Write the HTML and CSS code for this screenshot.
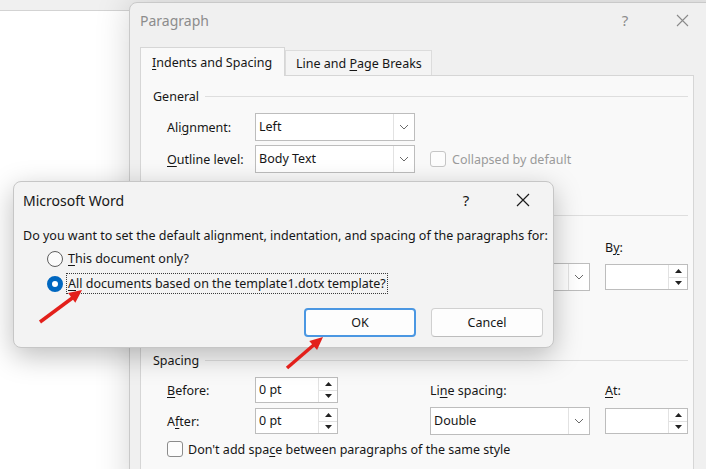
FILE: index.html
```html
<!DOCTYPE html>
<html>
<head>
<meta charset="utf-8">
<link rel="stylesheet" href="styles.css">
</head>
<body>
<div class="screen">
  <div class="ribbon"></div>

  <div class="para">
    <div class="para-title">
      <span class="para-name">Paragraph</span>
      <span class="tbtn help">?</span>
      <span class="tbtn close"><svg width="13" height="13" viewBox="0 0 13 13"><path d="M1 1 L12 12 M12 1 L1 12" stroke="#8a8a8a" stroke-width="1.1" fill="none"/></svg></span>
    </div>
    <div class="tabs">
      <div class="tab active"><u>I</u>ndents and Spacing</div>
      <div class="tab">Line and <u>P</u>age Breaks</div>
    </div>
    <div class="panel">
      <div class="legend general"><span>General</span></div>
      <div class="grid r-align">
        <span class="lbl">Ali<u>g</u>nment:</span>
        <div class="select"><span class="val">Left</span><span class="drop"><svg width="10" height="6" viewBox="0 0 10 6"><path d="M1 1 L5 5 L9 1" stroke="#6a6a6a" stroke-width="1" fill="none"/></svg></span></div>
      </div>
      <div class="grid r-outline">
        <span class="lbl"><u>O</u>utline level:</span>
        <div class="select"><span class="val">Body Text</span><span class="drop"><svg width="10" height="6" viewBox="0 0 10 6"><path d="M1 1 L5 5 L9 1" stroke="#6a6a6a" stroke-width="1" fill="none"/></svg></span></div>
        <div class="check disabled"><span class="cb"></span><span>Collapsed by default</span></div>
      </div>

      <div class="legend blank indent"></div>
      <div class="grid r-bylabel">
        <span class="lbl c4">B<u>y</u>:</span>
      </div>
      <div class="grid r-special">
        <div class="select c3"><span class="val"></span><span class="drop"><svg width="10" height="6" viewBox="0 0 10 6"><path d="M1 1 L5 5 L9 1" stroke="#6a6a6a" stroke-width="1" fill="none"/></svg></span></div>
        <div class="spin c4"><span class="val"></span><span class="arrows"><span><svg width="7" height="4" viewBox="0 0 7 4"><path d="M0 4 L3.5 0 L7 4 Z" fill="#222"/></svg></span><span><svg width="7" height="4" viewBox="0 0 7 4"><path d="M0 0 L3.5 4 L7 0 Z" fill="#222"/></svg></span></span></div>
      </div>

      <div class="legend spacing"><span>Spacing</span></div>
      <div class="grid r-before">
        <span class="lbl"><u>B</u>efore:</span>
        <div class="spin"><span class="val">0 pt</span><span class="arrows"><span><svg width="7" height="4" viewBox="0 0 7 4"><path d="M0 4 L3.5 0 L7 4 Z" fill="#222"/></svg></span><span><svg width="7" height="4" viewBox="0 0 7 4"><path d="M0 0 L3.5 4 L7 0 Z" fill="#222"/></svg></span></span></div>
        <span class="lbl">Li<u>n</u>e spacing:</span>
        <span class="lbl"><u>A</u>t:</span>
      </div>
      <div class="grid r-after">
        <span class="lbl">A<u>f</u>ter:</span>
        <div class="spin"><span class="val">0 pt</span><span class="arrows"><span><svg width="7" height="4" viewBox="0 0 7 4"><path d="M0 4 L3.5 0 L7 4 Z" fill="#222"/></svg></span><span><svg width="7" height="4" viewBox="0 0 7 4"><path d="M0 0 L3.5 4 L7 0 Z" fill="#222"/></svg></span></span></div>
        <div class="select"><span class="val">Double</span><span class="drop"><svg width="10" height="6" viewBox="0 0 10 6"><path d="M1 1 L5 5 L9 1" stroke="#6a6a6a" stroke-width="1" fill="none"/></svg></span></div>
        <div class="spin"><span class="val"></span><span class="arrows"><span><svg width="7" height="4" viewBox="0 0 7 4"><path d="M0 4 L3.5 0 L7 4 Z" fill="#222"/></svg></span><span><svg width="7" height="4" viewBox="0 0 7 4"><path d="M0 0 L3.5 4 L7 0 Z" fill="#222"/></svg></span></span></div>
      </div>
      <div class="check r-dont"><span class="cb"></span><span>Don't add spa<u>c</u>e between paragraphs of the same style</span></div>
    </div>
  </div>

  <div class="msg">
    <div class="msg-title">
      <span class="msg-name">Microsoft Word</span>
      <span class="tbtn help">?</span>
      <span class="tbtn close"><svg width="14" height="14" viewBox="0 0 14 14"><path d="M1 1 L13 13 M13 1 L1 13" stroke="#1b1b1b" stroke-width="1.2" fill="none"/></svg></span>
    </div>
    <div class="msg-text">Do you want to set the default alignment, indentation, and spacing of the paragraphs for:</div>
    <div class="opts">
      <div class="opt o1"><span class="radio"></span><span class="olbl"><u>T</u>his document only?</span></div>
      <div class="opt o2"><span class="radio on"></span><span class="olbl focus"><u>A</u>ll documents based on the template1.dotx template?</span></div>
    </div>
    <div class="btns">
      <div class="btn ok">OK</div>
      <div class="btn">Cancel</div>
    </div>
  </div>

  <svg class="marks" width="706" height="469" viewBox="0 0 706 469">
    <line x1="40" y1="322" x2="73" y2="297.5" stroke="#e3201b" stroke-width="3.5"/>
    <polygon points="82,290 75.3,302.7 68.1,293.1" fill="#e3201b"/>
    <line x1="287" y1="368" x2="314" y2="344.7" stroke="#e3201b" stroke-width="3.5"/>
    <polygon points="323,337 317.05,350 309.25,341" fill="#e3201b"/>
  </svg>
</div>
</body>
</html>
```

FILE: styles.css
```css
html, body {
  margin: 0;
  padding: 0;
}
body {
  font-family: "Noto Sans", "Open Sans", sans-serif;
  font-size: 12.5px;
  color: #161616;
}
u {
  text-decoration: underline;
  text-underline-offset: 2px;
  text-decoration-thickness: 1px;
}
.screen {
  position: relative;
  width: 706px;
  height: 469px;
  overflow: hidden;
  background: #ffffff;
}
.ribbon {
  height: 10px;
  background: #f0f0f0;
  border-bottom: 1px solid #d3d3d3;
}

/* Paragraph dialog (window behind) */
.para {
  position: absolute;
  left: 129px;
  top: 2px;
  width: 600px;
  height: 500px;
  box-sizing: border-box;
  background: #f0f0f0;
  border: 1px solid #c9c9c9;
  border-radius: 8px 8px 0 0;
  box-shadow: 0 0 34px rgba(0, 0, 0, 0.17);
}
.para-title {
  display: flex;
  align-items: center;
  height: 34px;
  padding-left: 10px;
  padding-right: 23px;
}
.para-name {
  flex: 1;
  font-size: 14px;
  color: #8c8c8c;
}
.tbtn {
  width: 46px;
  display: flex;
  justify-content: center;
  align-items: center;
  font-size: 15px;
}
.tbtn.help {
  margin-right: 11px;
}
.para .tbtn.help {
  color: #8c8c8c;
}
.tabs {
  display: flex;
  align-items: flex-end;
  height: 28px;
  margin-top: 10px;
  padding-left: 10px;
}
.tab {
  box-sizing: border-box;
  height: 25px;
  width: 147px;
  padding: 3px 0 0 10px;
  line-height: 20px;
  background: #f4f4f4;
  border: 1px solid #dcdcdc;
  border-bottom: none;
}
.tab.active {
  height: 29px;
  width: 145px;
  padding: 5px 0 0 11px;
  background: #f9f9f9;
  border-color: #d6d6d6;
  margin-bottom: -1px;
  position: relative;
  z-index: 1;
}
.panel {
  width: 554px;
  height: 430px;
  box-sizing: border-box;
  margin-left: 10px;
  background: #f9f9f9;
  border: 1px solid #d6d6d6;
  padding: 0 5px 0 12px;
}
.legend {
  display: flex;
  align-items: center;
  gap: 6px;
  height: 20px;
}
.legend::after {
  content: "";
  flex: 1;
  height: 1px;
  background: #dedede;
}
.legend.general { margin-top: 10px; }
.legend.indent { margin-top: 32px; }
.legend.spacing { margin-top: 59px; }

.grid {
  display: grid;
  grid-template-columns: 88px 175px 175px 83px;
  align-items: center;
  padding-left: 14px;
}
.c3 { grid-column: 3; }
.c4 { grid-column: 4; }
.r-align { margin-top: 7px; height: 28px; }
.r-outline { margin-top: 4px; height: 28px; }
.r-bylabel { margin-top: 13px; height: 18px; }
.r-special { margin-top: 7px; height: 28px; }
.r-before { margin-top: 7px; height: 26px; }
.r-after { margin-top: 4px; height: 28px; }

.select {
  width: 160px;
  height: 28px;
  box-sizing: border-box;
  display: flex;
  background: #ffffff;
  border: 1px solid #bdbdbd;
}
.select .val,
.spin .val {
  flex: 1;
  padding-left: 3px;
  line-height: 26px;
}
.spin .val { line-height: 24px; }
.select .drop {
  width: 20px;
  display: flex;
  align-items: center;
  justify-content: center;
  border-left: 1px solid #e2e2e2;
}
.spin {
  width: 83px;
  height: 26px;
  box-sizing: border-box;
  display: flex;
  background: #ffffff;
  border: 1px solid #bdbdbd;
}
.spin .arrows {
  width: 18px;
  display: flex;
  flex-direction: column;
  border-left: 1px solid #e2e2e2;
}
.spin .arrows span {
  flex: 1;
  display: flex;
  align-items: center;
  justify-content: center;
}
.spin .arrows span:first-child {
  border-bottom: 1px solid #e2e2e2;
}
.check {
  display: flex;
  align-items: center;
  gap: 6px;
}
.check.disabled {
  color: #9b9b9b;
}
.cb {
  width: 16px;
  height: 16px;
  box-sizing: border-box;
  border: 1px solid #8c8c8c;
  border-radius: 3px;
  background: #fdfdfd;
}
.check.disabled .cb {
  border-color: #c6c6c6;
}
.r-dont {
  margin-top: 6px;
  height: 16px;
  padding-left: 14px;
  gap: 5px;
}

/* Microsoft Word message box (on top) */
.msg {
  position: absolute;
  left: 13px;
  top: 181px;
  width: 541px;
  height: 167px;
  box-sizing: border-box;
  background: #f3f3f3;
  border: 1px solid #c6c6c6;
  border-radius: 8px;
  box-shadow: 0 8px 28px rgba(0, 0, 0, 0.26);
}
.msg-title {
  display: flex;
  align-items: center;
  height: 36px;
  padding-left: 9px;
  padding-right: 7px;
}
.msg-name {
  flex: 1;
  font-size: 14px;
}
.msg-text {
  margin-top: 8px;
  padding-left: 9px;
  line-height: 20px;
}
.opts {
  padding-left: 33px;
}
.opt {
  display: flex;
  align-items: center;
  height: 21px;
}
.opt.o1 { margin-top: 2px; }
.opt.o2 { margin-top: 4px; }
.radio {
  width: 16px;
  height: 16px;
  box-sizing: border-box;
  border-radius: 50%;
  border: 1px solid #5e5e5e;
  background: #fbfbfb;
  margin-right: 3px;
}
.radio.on {
  border: 5px solid #0067c0;
  background: #ffffff;
}
.olbl {
  border: 1px dotted transparent;
  padding: 0 1px;
  line-height: 19px;
}
.olbl.focus {
  border-color: #3a3a3a;
}
.btns {
  display: flex;
  justify-content: flex-end;
  gap: 15px;
  margin-top: 14px;
  padding-right: 10px;
}
.btn {
  width: 112px;
  height: 29px;
  box-sizing: border-box;
  display: flex;
  align-items: center;
  justify-content: center;
  background: #fdfdfd;
  border: 1px solid #d0d0d0;
  border-bottom-color: #bdbdbd;
  border-radius: 4px;
}
.btn.ok {
  border: 2px solid #4b97e2;
}
.marks {
  position: absolute;
  left: 0;
  top: 0;
  pointer-events: none;
}
```
